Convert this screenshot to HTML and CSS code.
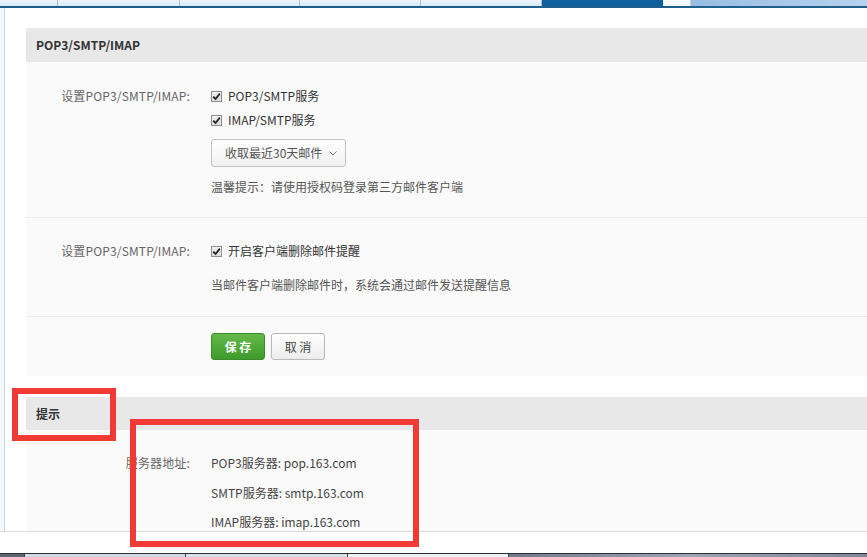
FILE: index.html
```html
<!DOCTYPE html>
<html lang="zh-CN">
<head>
<meta charset="utf-8">
<title>POP3/SMTP/IMAP</title>
<link rel="stylesheet" href="styles.css">
</head>
<body>
<div class="tabs">
  <div class="tab t1"></div>
  <div class="tab t2"></div>
  <div class="tab t3"></div>
  <div class="tab t4"></div>
  <div class="tab t5"></div>
  <div class="tab active"></div>
  <div class="tab gap"></div>
  <div class="tab rest"></div>
</div>
<div class="main">
  <div class="side"></div>
  <div class="content">
    <section class="panel">
      <div class="panel-head">POP3/SMTP/IMAP</div>
      <div class="row row-a">
        <div class="label">设置POP3/SMTP/IMAP:</div>
        <div class="field">
          <label class="check"><span class="box"><svg viewBox="0 0 9 9" width="9" height="9"><path d="M1.2 4.6 L3.6 7 L7.8 1.6" fill="none" stroke="#222" stroke-width="1.8"/></svg></span>POP3/SMTP服务</label>
          <label class="check"><span class="box"><svg viewBox="0 0 9 9" width="9" height="9"><path d="M1.2 4.6 L3.6 7 L7.8 1.6" fill="none" stroke="#222" stroke-width="1.8"/></svg></span>IMAP/SMTP服务</label>
          <div class="select">收取最近30天邮件<svg class="chev" viewBox="0 0 8 5" width="8" height="5"><path d="M0.5 0.5 L4 4 L7.5 0.5" fill="none" stroke="#777" stroke-width="1"/></svg></div>
          <p class="hint">温馨提示：请使用授权码登录第三方邮件客户端</p>
        </div>
      </div>
      <div class="row row-b">
        <div class="label">设置POP3/SMTP/IMAP:</div>
        <div class="field">
          <label class="check"><span class="box"><svg viewBox="0 0 9 9" width="9" height="9"><path d="M1.2 4.6 L3.6 7 L7.8 1.6" fill="none" stroke="#222" stroke-width="1.8"/></svg></span>开启客户端删除邮件提醒</label>
          <p class="hint hint-b">当邮件客户端删除邮件时，系统会通过邮件发送提醒信息</p>
        </div>
      </div>
      <div class="row row-c">
        <div class="label"></div>
        <div class="field buttons">
          <button class="btn btn-save">保 存</button>
          <button class="btn btn-cancel">取 消</button>
        </div>
      </div>
    </section>
    <section class="panel panel-tip">
      <div class="panel-head">提示</div>
      <div class="row row-d">
        <div class="label">服务器地址:</div>
        <div class="field servers">
          <p>POP3服务器: pop.163.com</p>
          <p>SMTP服务器: smtp.163.com</p>
          <p>IMAP服务器: imap.163.com</p>
        </div>
      </div>
    </section>
  </div>
</div>
<div class="taskbar">
  <div class="seg s1"></div>
  <div class="seg s2"></div>
  <div class="seg s3"></div>
  <div class="seg s4"></div>
  <div class="seg s5"></div>
</div>
<div class="mark mark-1"></div>
<div class="mark mark-2"></div>
</body>
</html>
```

FILE: styles.css
```css
* { box-sizing: border-box; }
html, body {
  margin: 0;
  padding: 0;
  width: 867px;
  height: 557px;
  overflow: hidden;
  background: #ffffff;
  font-family: "Noto Sans CJK SC", "Noto Sans", sans-serif;
  font-size: 12px;
  color: #333;
  position: relative;
}

/* top tab strip */
.tabs {
  display: flex;
  height: 8px;
  border-bottom: 2px solid #1f5f8c;
}
.tab {
  height: 6px;
  background: linear-gradient(#eef6fd, #d9eaf7);
  border-right: 1px solid #a7bfd3;
}
.t1 { width: 58px; }
.t2 { width: 122px; }
.t3 { width: 120px; }
.t4 { width: 121px; }
.t5 { width: 121px; }
.tab.active { width: 121px; background: #0e5f9c; border-right: none; }
.tab.gap { width: 28px; background: #f4f8fc; border-right: 1px solid #c6d6e4; }
.tab.rest { flex: 1; background: linear-gradient(90deg, #98bde2, #b7d2ee); border-right: none; }

/* main area */
.main {
  display: flex;
  height: 524px;
  border-bottom: 1px solid #dcdcdc;
  overflow: hidden;
}
.side {
  width: 5px;
  background: #f3f8fc;
  border-right: 1px solid #c9d4de;
}
.content {
  flex: 1;
  padding: 20px 0 0 21px;
  overflow: hidden;
}

.panel { background: #fafafa; }
.panel-head {
  height: 34px;
  line-height: 34px;
  padding-left: 10px;
  background: #e8e8e8;
  font-weight: bold;
  color: #333;
  font-size: 12px;
}
.panel-tip { margin-top: 21px; }
.panel-tip .panel-head { height: 33px; line-height: 33px; }

.row {
  display: grid;
  grid-template-columns: 164px 1fr;
  column-gap: 21px;
  border-top: 1px solid #ececec;
}
.panel-head + .row { border-top: none; }
.label {
  text-align: right;
  color: #666;
  line-height: 24px;
  letter-spacing: 0.15px;
}
.field { display: flex; flex-direction: column; align-items: flex-start; }

.row-a { padding: 22px 0 18px; }
.row-b { padding: 21px 0 19px; }
.row-c { padding: 16px 0 16px; }
.row-d { padding: 18px 0 0; border-top: 1px solid #ececec; }

.check {
  display: flex;
  align-items: center;
  line-height: 24px;
  color: #333;
}
.box {
  width: 11px;
  height: 11px;
  border: 1px solid #8e8f8f;
  background: linear-gradient(#f2f2f2, #dcdcdc);
  margin-right: 6px;
  display: flex;
  align-items: center;
  justify-content: center;
}

.select {
  margin-top: 7px;
  width: 135px;
  height: 28px;
  border: 1px solid #c4c4c4;
  border-radius: 3px;
  background: linear-gradient(#ffffff, #f1f1f1);
  color: #555;
  line-height: 26px;
  padding-left: 13px;
  display: flex;
  align-items: center;
}
.chev { margin-left: 7px; }

.hint {
  margin: 8px 0 0;
  line-height: 24px;
  color: #555;
}
.hint-b { margin-top: 10px; }

.buttons { flex-direction: row; gap: 6px; }
.btn {
  height: 27px;
  width: 54px;
  border-radius: 3px;
  font-family: inherit;
  font-size: 12px;
  padding: 0;
  cursor: pointer;
}
.btn-save {
  background: linear-gradient(#63ba48, #3e9a2c);
  border: 1px solid #3a8c2b;
  color: #fff;
  font-weight: bold;
}
.btn-cancel {
  background: linear-gradient(#ffffff, #ececec);
  border: 1px solid #b8b8b8;
  color: #444;
}

.servers p {
  margin: 0;
  line-height: 29.5px;
  color: #444;
}
.row-d .label { line-height: 29.5px; }

/* bottom task strip */
.taskbar {
  position: absolute;
  left: 0;
  right: 0;
  bottom: 0;
  height: 4px;
  display: flex;
  border-top: 1px solid #2a2f36;
}
.seg { height: 3px; border-right: 1px solid #3b4550; }
.s1 { width: 25px; background: #5c646d; }
.s2 { width: 161px; background: #cfdbe3; }
.s3 { width: 162px; background: #d5e0e7; }
.s4 { width: 161px; background: #eef1f3; }
.s5 { flex: 1; background: linear-gradient(90deg, #6f7b87, #9aa6b2, #7d8894); border-right: none; }

/* red annotation frames */
.mark {
  position: absolute;
  border: 6px solid #f03a36;
}
.mark-1 { left: 12px; top: 388px; width: 104px; height: 53px; }
.mark-2 { left: 130px; top: 419px; width: 289px; height: 128px; }
```
